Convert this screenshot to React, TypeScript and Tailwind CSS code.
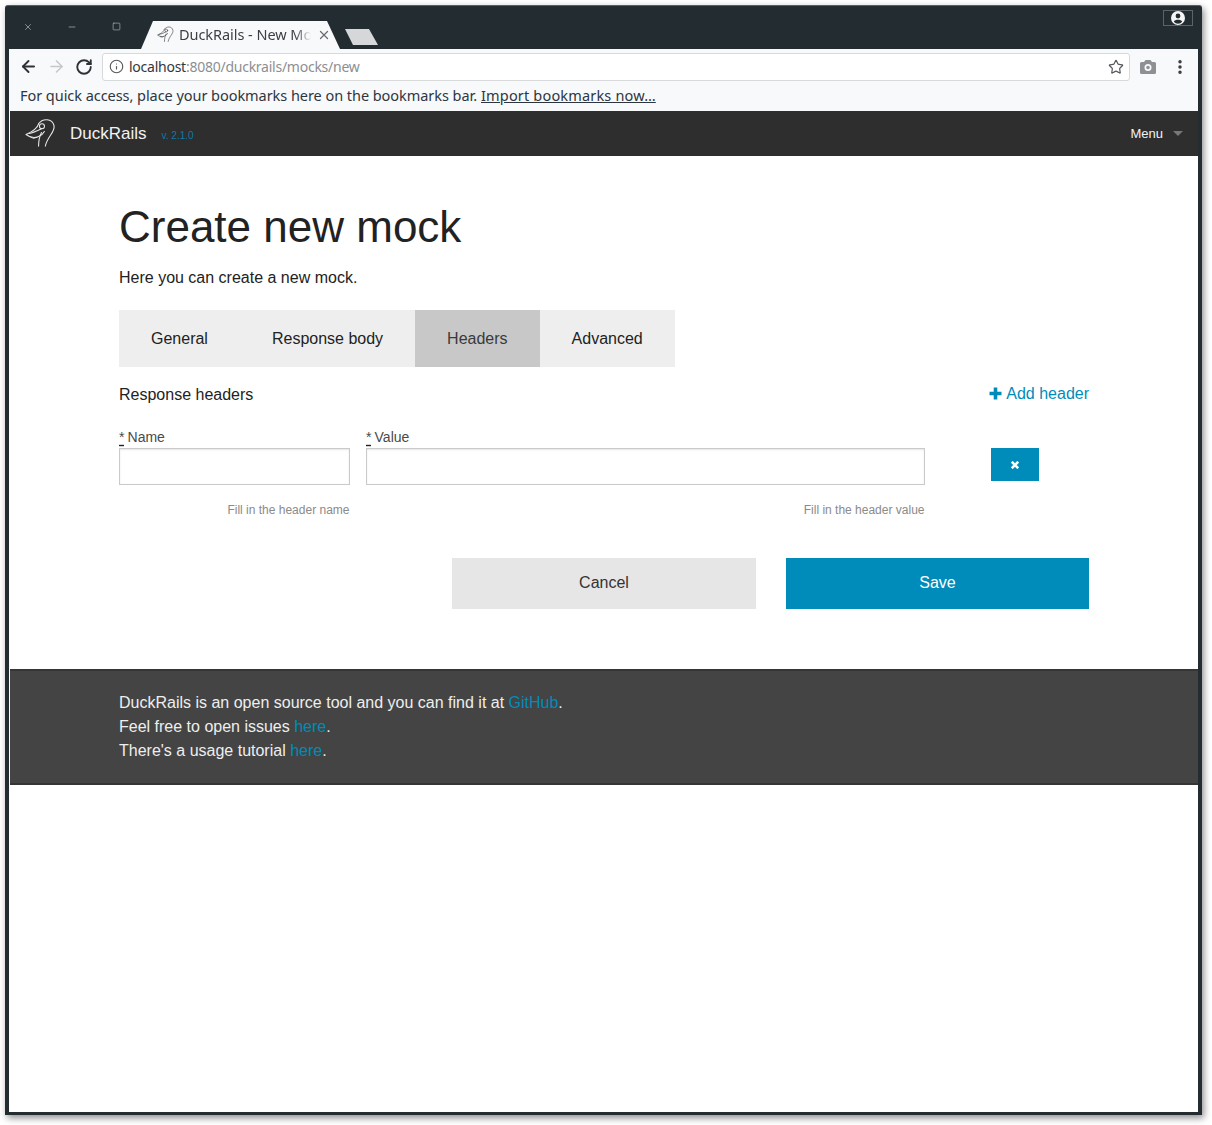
import React from "react";
import { Star, EllipsisVertical, ArrowLeft, ArrowRight, RotateCw, Info, X, Minus, Square } from "lucide-react";

const Duck = ({ className }: { className?: string }) => (
  <svg viewBox="0 0 32 32" className={className} fill="none" stroke="currentColor" strokeWidth="1.1" strokeLinecap="round" strokeLinejoin="round">
    <path d="M14 6C18 0 28 0 30 8c1 7-7 11-9 21" />
    <path d="M14 6c-1 4-4 7-13 11 4 3 9 4 13 2 3-1 5-3 6-5" />
    <path d="M4 16c5-1 9-3 13-5" />
    <circle cx="17.500" cy="8.500" r="2.600" />
    <path d="M17 15c-2 4-3 9-3 14" />
    <path d="M6 20c2 1 4 1 6 0" />
  </svg>
);

const Field = ({ label, hint, className }: { label: string; hint: string; className: string }) => (
  <div className={className}>
    <label className="block text-[14px] leading-[16px] text-[#4a4a4a] mt-[1px] [word-spacing:-0.8px]">
      <span className="underline decoration-dashed decoration-[#222] underline-offset-[3px]">*</span> {label}
    </label>
    <div className="h-[37px] border border-[#cacaca] bg-white shadow-[inset_0_1px_2px_rgba(10,10,10,0.1)] mt-[3px]" />
    <p className="text-right text-[12px] leading-[14px] text-[#8a8a8a] mt-[18px] pr-[0.5px]">{hint}</p>
  </div>
);

export default function App() {
  return (
    <div className="w-[1212px] h-[1125px] bg-white pl-[5px] pt-[5px] font-['Liberation_Sans',sans-serif] overflow-hidden">
      <div className="w-[1197px] h-[1110px] bg-[#232c31] rounded-t-[3px] px-[4px] pb-[3px] flex flex-col shadow-[2px_3px_7px_rgba(0,0,0,0.45)] border-t border-[#5a5f62]">
        {/* tab strip */}
        <div className="h-[43px] flex items-end shrink-0 relative">
          <div className="flex items-center h-[43px] text-[#c5c9cb] pb-[2px]">
            <span className="w-[44px] pl-[14px] flex"><X size={10} strokeWidth={1.5} /></span>
            <span className="w-[44px] pl-[14px] flex"><Minus size={10} strokeWidth={1.5} /></span>
            <span className="w-[36px] pl-[15px] flex"><Square size={9} strokeWidth={1.5} /></span>
          </div>
          <div className="relative w-[204px] h-[28px] shrink-0 ml-[8px]">
            <svg viewBox="0 0 204 28" className="absolute inset-0 w-full h-full">
              <path d="M0 28 L12 0 L186 0 L199 28 Z" fill="#f8f9fb" />
            </svg>
            <div className="relative h-full flex items-center pl-[16px] font-['Noto_Sans',sans-serif] text-[14.5px] text-[#3a3f44] pb-[1px]">
              <Duck className="w-[17px] h-[17px] text-[#333] mr-[5px] shrink-0" />
              <span className="w-[132px] overflow-hidden whitespace-nowrap tracking-[-0.05px] [mask-image:linear-gradient(to_right,black_88%,transparent)]">DuckRails - New Mock</span>
              <X size={14} strokeWidth={2.2} className="text-[#6a6e72] ml-[6px] shrink-0" />
            </div>
          </div>
          <svg viewBox="0 0 34 16" className="w-[34px] h-[16px] mb-[4px] shrink-0">
            <path d="M0 0 L24 0 L33 16 L8 16 Z" fill="#d6d7d8" />
          </svg>
          <div className="absolute right-[5px] top-[4px] w-[30px] h-[16px] border border-[#5c6468] flex items-center justify-center">
            <svg viewBox="0 0 14 14" className="w-[14px] h-[14px]" fill="#f5f5f5">
              <path fillRule="evenodd" d="M7 0a7 7 0 1 1 0 14A7 7 0 0 1 7 0zm0 2.600a2.400 2.400 0 1 0 0 4.800 2.400 2.400 0 0 0 0-4.800zm0 6.200c-1.900 0-3.600.6-4.200 1.900a5.200 5.200 0 0 0 8.400 0C10.600 9.400 8.900 8.800 7 8.800z" />
            </svg>
          </div>
        </div>
        {/* toolbar */}
        <div className="bg-[#f8f9fb] h-[35px] flex items-center shrink-0">
          <ArrowLeft size={19} strokeWidth={2.4} className="text-[#2e3236] ml-[10px]" />
          <ArrowRight size={19} strokeWidth={2} className="text-[#c6c8ca] ml-[9px]" />
          <RotateCw size={18} strokeWidth={2.5} className="text-[#2e3236] ml-[9px]" />
          <div className="w-[1028px] h-[28px] ml-[9px] bg-white border border-[#d8d9db] rounded-[3px] flex items-center pl-[6px] pr-[5px] font-['Noto_Sans',sans-serif] text-[14px]">
            <Info size={15} strokeWidth={1.8} className="text-[#55595d]" />
            <span className="ml-[5px] text-[#33373b] tracking-[-0.25px]">localhost</span>
            <span className="text-[#8c8f92] tracking-[-0.25px]">:8080/duckrails/mocks/new</span>
            <Star size={16} strokeWidth={1.8} className="text-[#55595d] ml-auto" />
          </div>
          <svg viewBox="0 0 16 14" className="w-[16px] h-[14px] ml-[10px]">
            <path fillRule="evenodd" fill="#8e9093" d="M5.500 0h5L12 2h2.500A1.500 1.500 0 0 1 16 3.500v9a1.500 1.500 0 0 1-1.500 1.500h-13A1.500 1.500 0 0 1 0 12.500v-9A1.500 1.500 0 0 1 1.500 2H4zM8 4a3.500 3.500 0 1 0 0 7 3.500 3.500 0 0 0 0-7zm0 1.700a1.800 1.800 0 1 1 0 3.600 1.800 1.800 0 0 1 0-3.600z" />
          </svg>
          <EllipsisVertical size={18} strokeWidth={2.6} className="text-[#33373b] ml-[15px]" />
        </div>
        {/* bookmarks */}
        <div className="bg-[#f8f9fb] h-[27px] flex items-center pl-[11px] font-['Noto_Sans',sans-serif] text-[14.5px] text-[#2d3640] shrink-0 pb-[3px]">
          <span className="w-[459px] whitespace-nowrap tracking-[-0.05px]">For quick access, place your bookmarks here on the bookmarks bar.</span>
          <span className="underline tracking-[0.17px] ml-[2px]">Import bookmarks now…</span>
        </div>
        {/* page */}
        <div className="flex-1 bg-white pl-[1px] min-h-0">
          <div className="w-[1188px]">
            <nav className="h-[45px] bg-[#2e2e2e] flex items-center pl-[15px] pr-[15px]">
              <Duck className="w-[31px] h-[31px] text-[#e8e8e8]" />
              <span className="ml-[14px] text-[17px] text-[#f2f2f2]">DuckRails</span>
              <span className="ml-[15px] text-[10px] text-[#0a7ca3] mt-[4px]">v. 2.1.0</span>
              <span className="ml-auto text-[13px] text-[#f2f2f2]">Menu</span>
              <span className="ml-[10px] border-x-[5px] border-x-transparent border-t-[5px] border-t-[#777]" />
            </nav>
            <main className="px-[109px] h-[513px]">
              <h1 className="text-[44px] leading-[62px] text-[#222222] pt-[40px] box-content h-[62px]">Create new mock</h1>
              <p className="text-[16px] leading-[24px] text-[#222222] mt-[8px]">Here you can create a new mock.</p>
              <div className="flex w-[556px] h-[57px] bg-[#eeeeee] mt-[20px] text-[16px] text-[#222222]">
                <span className="px-[32px] flex items-center">General</span>
                <span className="px-[32px] flex items-center">Response body</span>
                <span className="px-[32px] flex items-center bg-[#c8c8c8] text-[#3a3a3a]">Headers</span>
                <span className="px-[32px] flex items-center">Advanced</span>
              </div>
              <div className="flex items-start justify-between h-[61px] text-[16px] leading-[24px]">
                <span className="text-[#222222] mt-[16px]">Response headers</span>
                <span className="flex items-center text-[#008cba] mt-[15px]">
                  <svg viewBox="0 0 13 13" className="w-[13px] h-[13px] mr-[4px] mb-[2px]" fill="currentColor">
                    <path d="M4.700 0.500h3.600v4.200h4.200v3.600H8.300v4.200H4.700V8.300H0.500V4.700h4.200z" />
                  </svg>
                  Add header
                </span>
              </div>
              <div className="flex items-start">
                <Field label="Name" hint="Fill in the header name" className="w-[231px] shrink-0" />
                <Field label="Value" hint="Fill in the header value" className="w-[559px] shrink-0 ml-[16px]" />
                <div className="w-[48px] h-[33px] bg-[#008cba] ml-[66px] mt-[20px] flex items-center justify-center text-white shrink-0">
                  <svg viewBox="0 0 10 10" className="w-[8px] h-[8px]" stroke="currentColor" strokeWidth="3.200" strokeLinecap="butt">
                    <path d="M1 1l8 8M9 1l-8 8" />
                  </svg>
                </div>
              </div>
              <div className="flex justify-end gap-[30px] mt-[41px] text-[16px]">
                <button className="w-[304px] h-[51px] bg-[#e6e6e6] text-[#333333] pb-[2px]">Cancel</button>
                <button className="w-[303px] h-[51px] bg-[#008cba] text-white pb-[2px]">Save</button>
              </div>
            </main>
            <footer className="h-[116px] bg-[#444444] border-y-2 border-[#363636] pl-[109px] pt-[20px] text-[16px] leading-[24px] text-[#eeeeee]">
              <p>DuckRails is an open source tool and you can find it at <a className="text-[#008cba]">GitHub</a>.</p>
              <p>Feel free to open issues <a className="text-[#008cba]">here</a>.</p>
              <p>There's a usage tutorial <a className="text-[#008cba]">here</a>.</p>
            </footer>
          </div>
        </div>
      </div>
    </div>
  );
}
